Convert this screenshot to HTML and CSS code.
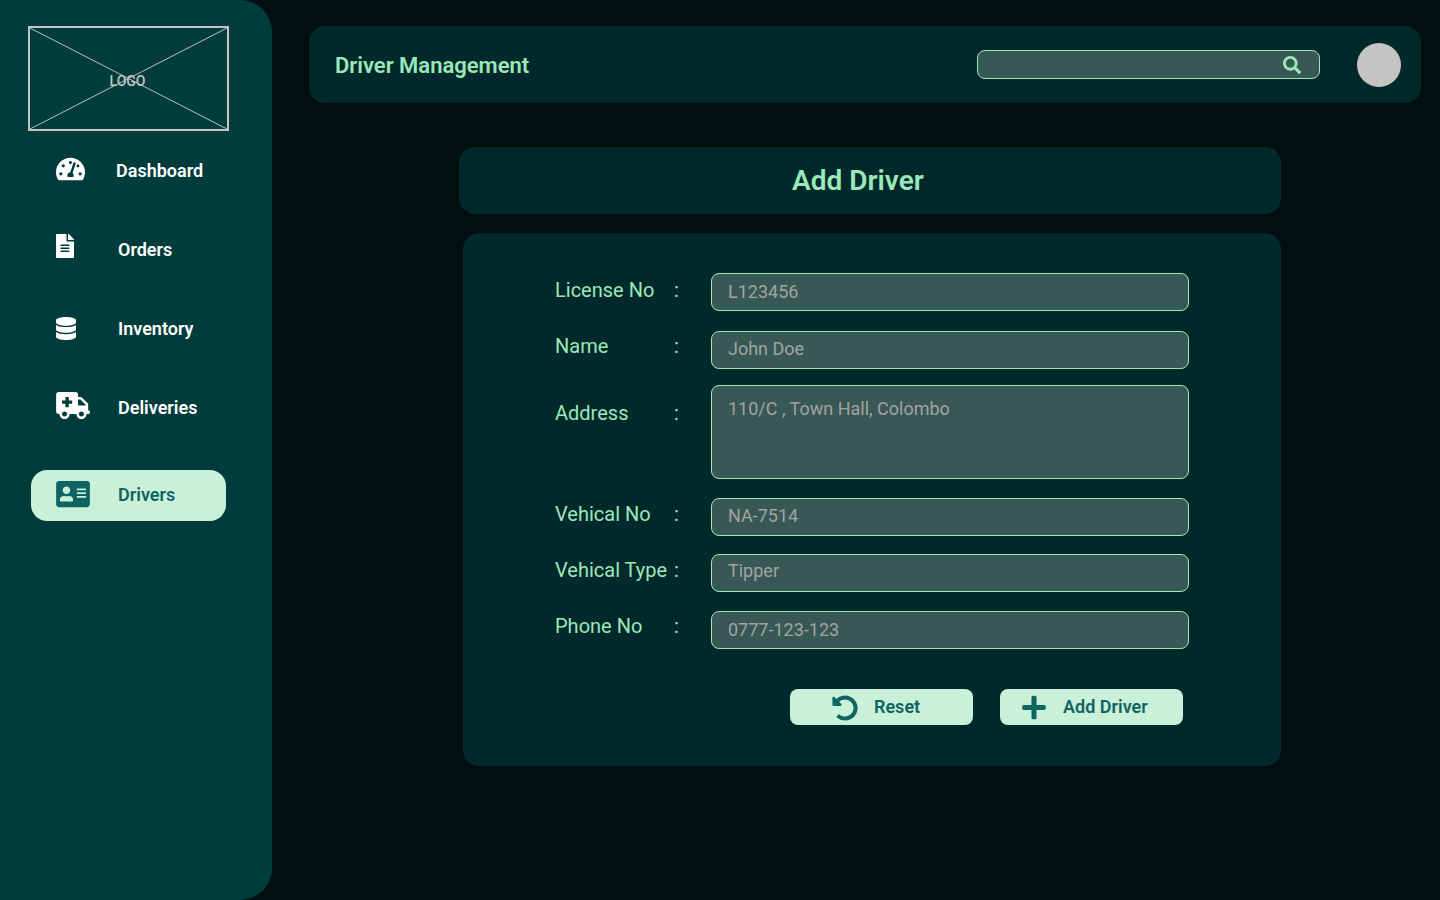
FILE: index.html

```html
<!DOCTYPE html>
<html lang="en">
<head>
  <meta charset="UTF-8">
  <title>Driver Management</title>
  <link rel="stylesheet" href="styles.css">
</head>
<body>
  <aside class="sidebar">
    <div class="logo">
      <svg class="logo-lines" viewBox="0 0 201 105" preserveAspectRatio="none">
        <line x1="0" y1="0" x2="201" y2="105"></line>
        <line x1="201" y1="0" x2="0" y2="105"></line>
      </svg>
      <span class="logo-text">LOGO</span>
    </div>
    <nav class="nav">
      <a class="nav-item nav-dashboard">
        <span class="nav-icon"><svg width="29" height="26" viewBox="0 0 576 512"><path d="M288 32C128.94 32 0 160.94 0 320c0 52.8 14.25 102.26 39.06 144.8 5.61 9.62 16.3 15.2 27.44 15.2h443c11.14 0 21.83-5.58 27.44-15.2C561.75 422.26 576 372.8 576 320c0-159.06-128.94-288-288-288zm0 64c14.71 0 26.58 10.13 30.32 23.65-1.11 2.26-2.64 4.23-3.45 6.67l-9.22 27.67c-5.13 3.49-10.97 6.01-17.64 6.01-17.67 0-32-14.33-32-32S270.33 96 288 96zM96 384c-17.67 0-32-14.33-32-32s14.33-32 32-32 32 14.33 32 32-14.33 32-32 32zm48-160c-17.67 0-32-14.33-32-32s14.33-32 32-32 32 14.33 32 32-14.33 32-32 32zm246.77-72.41l-61.33 184C343.13 347.33 352 364.54 352 384c0 11.72-3.38 22.55-8.88 32H232.88c-5.5-9.45-8.88-20.28-8.88-32 0-33.94 26.5-61.43 59.9-63.59l61.34-184.01c4.17-12.56 17.73-19.45 30.36-15.17 12.57 4.19 19.35 17.79 15.17 30.36zm14.66 57.2l15.52-46.55c3.47-1.29 7.13-2.23 11.05-2.23 17.67 0 32 14.33 32 32s-14.33 32-32 32c-11.38-.01-20.89-6.28-26.57-15.22zM480 384c-17.67 0-32-14.33-32-32s14.33-32 32-32 32 14.33 32 32-14.33 32-32 32z"></path></svg></span>
        Dashboard
      </a>
      <a class="nav-item nav-orders">
        <span class="nav-icon"><svg width="18" height="24" viewBox="0 0 384 512"><path d="M224 136V0H24C10.7 0 0 10.7 0 24v464c0 13.3 10.7 24 24 24h336c13.3 0 24-10.7 24-24V160H248c-13.2 0-24-10.8-24-24zm64 236c0 6.6-5.4 12-12 12H108c-6.6 0-12-5.4-12-12v-8c0-6.6 5.4-12 12-12h168c6.6 0 12 5.4 12 12v8zm0-64c0 6.6-5.4 12-12 12H108c-6.6 0-12-5.4-12-12v-8c0-6.6 5.4-12 12-12h168c6.6 0 12 5.4 12 12v8zm0-72v8c0 6.6-5.4 12-12 12H108c-6.6 0-12-5.4-12-12v-8c0-6.6 5.4-12 12-12h168c6.6 0 12 5.4 12 12zm96-114.1v6.1H256V0h6.1c6.4 0 12.5 2.5 17 7l97.9 98c4.5 4.5 7 10.6 7 16.9z"></path></svg></span>
        Orders
      </a>
      <a class="nav-item">
        <span class="nav-icon"><svg width="20" height="23" viewBox="0 0 448 512"><path d="M448 73.143v45.714C448 159.143 347.667 192 224 192S0 159.143 0 118.857V73.143C0 32.857 100.333 0 224 0s224 32.857 224 73.143zM448 176v102.857C448 319.143 347.667 352 224 352S0 319.143 0 278.857V176c48.125 33.143 136.208 48.572 224 48.572S399.874 209.143 448 176zm0 160v102.857C448 479.143 347.667 512 224 512S0 479.143 0 438.857V336c48.125 33.143 136.208 48.572 224 48.572S399.874 369.143 448 336z"></path></svg></span>
        Inventory
      </a>
      <a class="nav-item nav-deliveries">
        <span class="nav-icon"><svg width="34" height="27" viewBox="0 0 640 512"><path d="M624 352h-16V243.9c0-12.7-5.1-24.9-14.1-33.9L494 110.1c-9-9-21.2-14.1-33.9-14.1H416V48c0-26.5-21.5-48-48-48H48C21.5 0 0 21.5 0 48v320c0 26.5 21.5 48 48 48h16c0 53 43 96 96 96s96-43 96-96h128c0 53 43 96 96 96s96-43 96-96h48c8.8 0 16-7.2 16-16v-32c0-8.8-7.2-16-16-16zM160 464c-26.5 0-48-21.5-48-48s21.5-48 48-48 48 21.5 48 48-21.5 48-48 48zm144-248c0 4.4-3.6 8-8 8h-56v56c0 4.4-3.6 8-8 8h-48c-4.4 0-8-3.6-8-8v-56h-56c-4.4 0-8-3.6-8-8v-48c0-4.4 3.6-8 8-8h56v-56c0-4.4 3.6-8 8-8h48c4.4 0 8 3.6 8 8v56h56c4.4 0 8 3.6 8 8v48zm176 248c-26.5 0-48-21.5-48-48s21.5-48 48-48 48 21.5 48 48-21.5 48-48 48zm80-208H416V144h44.1l99.9 99.9V256z"></path></svg></span>
        Deliveries
      </a>
      <a class="nav-item active">
        <span class="nav-icon"><svg width="34" height="30" viewBox="0 0 576 512"><path d="M528 32H48C21.5 32 0 53.5 0 80v352c0 26.5 21.5 48 48 48h480c26.5 0 48-21.5 48-48V80c0-26.5-21.5-48-48-48zm-352 96c35.3 0 64 28.7 64 64s-28.7 64-64 64-64-28.7-64-64 28.7-64 64-64zm112 236.8c0 10.6-10 19.2-22.4 19.2H86.4C74 384 64 375.4 64 364.8v-19.2c0-31.8 30.1-57.6 67.2-57.6h5c12.3 5.1 25.7 8 39.8 8s27.6-2.9 39.8-8h5c37.1 0 67.2 25.8 67.2 57.6v19.2zM512 312c0 4.4-3.6 8-8 8H360c-4.4 0-8-3.6-8-8v-16c0-4.4 3.6-8 8-8h144c4.4 0 8 3.6 8 8v16zm0-64c0 4.4-3.6 8-8 8H360c-4.4 0-8-3.6-8-8v-16c0-4.4 3.6-8 8-8h144c4.4 0 8 3.6 8 8v16zm0-64c0 4.4-3.6 8-8 8H360c-4.4 0-8-3.6-8-8v-16c0-4.4 3.6-8 8-8h144c4.4 0 8 3.6 8 8v16z"></path></svg></span>
        Drivers
      </a>
    </nav>
  </aside>

  <main class="content">
    <header class="topbar">
      <h1 class="page-title">Driver Management</h1>
      <div class="search">
        <svg width="18" height="18" viewBox="0 0 512 512"><path d="M505 442.7L405.3 343c-4.5-4.5-10.6-7-17-7H372c27.6-35.3 44-79.7 44-128C416 93.1 322.9 0 208 0S0 93.1 0 208s93.1 208 208 208c48.3 0 92.7-16.4 128-44v16.3c0 6.4 2.5 12.5 7 17l99.7 99.7c9.4 9.4 24.6 9.4 33.9 0l28.3-28.3c9.4-9.4 9.4-24.6.1-34zM208 336c-70.7 0-128-57.2-128-128 0-70.7 57.2-128 128-128 70.7 0 128 57.2 128 128 0 70.7-57.2 128-128 128z"></path></svg>
      </div>
      <div class="avatar"></div>
    </header>

    <div class="form-title"><h2>Add Driver</h2></div>

    <form class="form-card">
      <div class="row row-license">
        <label>License No</label><span class="colon">:</span>
        <input type="text" placeholder="L123456">
      </div>
      <div class="row row-name">
        <label>Name</label><span class="colon">:</span>
        <input type="text" placeholder="John Doe">
      </div>
      <div class="row row-address">
        <label>Address</label><span class="colon">:</span>
        <textarea placeholder="110/C , Town Hall, Colombo"></textarea>
      </div>
      <div class="row row-vehicle">
        <label>Vehical No</label><span class="colon">:</span>
        <input type="text" placeholder="NA-7514">
      </div>
      <div class="row row-type">
        <label>Vehical Type</label><span class="colon">:</span>
        <input type="text" placeholder="Tipper">
      </div>
      <div class="row row-phone">
        <label>Phone No</label><span class="colon">:</span>
        <input type="text" placeholder="0777-123-123">
      </div>
      <div class="actions">
        <button type="button" class="btn btn-reset">
          <svg width="26" height="26" viewBox="0 0 512 512"><path d="M255.545 8c-66.269.119-126.438 26.233-170.86 68.685L48.971 40.971C33.851 25.851 8 36.559 8 57.941V192c0 13.255 10.745 24 24 24h134.059c21.382 0 32.09-25.851 16.971-40.971l-41.75-41.75c30.864-28.899 70.801-44.907 113.23-45.273 92.398-.798 170.283 73.977 169.484 169.442C423.236 348.009 349.816 424 256 424c-41.127 0-79.997-14.678-110.63-41.556-4.743-4.161-11.906-3.908-16.368.553L89.34 422.659c-4.872 4.872-4.631 12.815.482 17.433C133.798 479.813 192.074 504 256 504c136.966 0 247.999-111.033 248-247.998C504.001 119.193 392.354 7.755 255.545 8z"></path></svg>
          Reset
        </button>
        <button type="button" class="btn btn-add">
          <svg width="24" height="27" viewBox="0 0 448 512"><path d="M416 208H272V64c0-17.67-14.33-32-32-32h-32c-17.67 0-32 14.33-32 32v144H32c-17.67 0-32 14.33-32 32v32c0 17.67 14.33 32 32 32h144v144c0 17.67 14.33 32 32 32h32c17.67 0 32-14.33 32-32V304h144c17.67 0 32-14.33 32-32v-32c0-17.67-14.33-32-32-32z"></path></svg>
          Add Driver
        </button>
      </div>
    </form>
  </main>
</body>
</html>
```

FILE: styles.css

```css
* {
  box-sizing: border-box;
}
body {
  margin: 0;
  height: 900px;
  display: flex;
  background-color: #010f10;
  font-family: Roboto, "Liberation Sans", sans-serif;
  overflow: hidden;
}

/* sidebar */
.sidebar {
  width: 272px;
  height: 900px;
  flex-shrink: 0;
  background-color: #003c3c;
  border-radius: 0 32px 32px 0;
  padding: 26px 0 0 28px;
}
.logo {
  position: relative;
  width: 201px;
  height: 105px;
  border: 2px solid #c4c4c4;
  display: flex;
  align-items: center;
  justify-content: center;
}
.logo-lines {
  position: absolute;
  top: 0;
  left: 0;
  width: 100%;
  height: 100%;
}
.logo-lines line {
  stroke: #c4c4c4;
  stroke-width: 1;
}
.logo-text {
  position: relative;
  top: 2px;
  left: -1px;
  color: #c4c4c4;
  font-size: 14px;
  font-weight: 500;
}
.nav {
  display: flex;
  flex-direction: column;
  margin-top: 14px;
  margin-left: 3px;
  width: 195px;
}
.nav-item {
  height: 51px;
  margin-bottom: 28px;
  display: flex;
  align-items: center;
  padding-left: 25px;
  color: #fff;
  font-size: 18px;
  font-weight: 600;
  border-radius: 16px;
}
.nav-item:nth-child(4) {
  margin-bottom: 37px;
}
.nav-icon {
  width: 62px;
  display: flex;
  fill: #fff;
}
.nav-dashboard .nav-icon {
  width: 60px;
  margin-bottom: 3px;
}
.nav-orders .nav-icon {
  margin-bottom: 8px;
}
.nav-deliveries .nav-icon {
  margin-bottom: 4px;
}
.nav-item.active {
  background-color: #c9f0d9;
  color: #0e6461;
  padding-bottom: 2px;
}
.nav-item.active .nav-icon {
  fill: #0e6461;
  margin-bottom: 2px;
}

/* main */
.content {
  flex: 1;
  padding: 26px 19px 0 37px;
}
.topbar {
  height: 77px;
  display: flex;
  align-items: center;
  background-color: #01292b;
  border-radius: 16px;
  padding: 0 20px 0 26px;
}
.page-title {
  margin: 0;
  flex: 1;
  padding-top: 2px;
  color: #9be8b8;
  font-size: 22px;
  font-weight: 600;
}
.search {
  width: 343px;
  height: 29px;
  margin-top: -1px;
  display: flex;
  align-items: center;
  justify-content: flex-end;
  padding: 2px 18px 0 0;
  background-color: #385855;
  border: 1px solid #9be8b8;
  border-radius: 8px;
  fill: #9be8b8;
}
.avatar {
  width: 44px;
  height: 44px;
  margin-left: 37px;
  border-radius: 50%;
  background-color: #c4c4c4;
}
.form-title {
  width: 822px;
  height: 67px;
  margin: 44px 0 0 150px;
  padding-right: 24px;
  display: flex;
  align-items: center;
  justify-content: center;
  background-color: #01292b;
  border-radius: 16px;
}
.form-title h2 {
  margin: 0;
  color: #9be8b8;
  font-size: 28px;
  font-weight: 600;
}
.form-card {
  width: 818px;
  height: 533px;
  margin: 19px 0 0 154px;
  padding: 40px 92px 0;
  background-color: #01292b;
  border-radius: 16px;
}

/* form rows */
.row {
  display: flex;
  align-items: flex-start;
  color: #9be8b8;
  font-size: 20px;
}
.row label {
  width: 119px;
}
.row .colon {
  width: 37px;
}
.row input,
.row textarea {
  width: 478px;
  height: 38px;
  padding: 0 16px;
  background-color: #385855;
  border: 1px solid #9be8b8;
  border-radius: 8px;
  color: #a3a3a3;
  font-family: Roboto, "Liberation Sans", sans-serif;
  font-size: 18px;
  outline: none;
  resize: none;
}
.row textarea {
  height: 94px;
  padding-top: 12px;
  display: block;
}
.row ::placeholder {
  color: #a3a3a3;
  opacity: 1;
}
.row-license { margin-bottom: 20px; }
.row-name { margin-bottom: 16px; }
.row-address { margin-bottom: 19px; }
.row-vehicle { margin-bottom: 18px; }
.row-type { margin-bottom: 19px; }
.row-license label, .row-license .colon { padding-top: 5px; }
.row-name label, .row-name .colon { padding-top: 3px; }
.row-address label, .row-address .colon { padding-top: 16px; }
.row-vehicle label, .row-vehicle .colon { padding-top: 4px; }
.row-type label, .row-type .colon { padding-top: 4px; }
.row-phone label, .row-phone .colon { padding-top: 3px; }
.row-license input { padding-bottom: 2px; }
.row-name input { padding-bottom: 3px; }
.row-vehicle input { padding-bottom: 4px; }
.row-type input { padding-bottom: 6px; }
.row-phone input { padding-bottom: 2px; }
.actions {
  display: flex;
  gap: 27px;
  margin-top: 40px;
  margin-left: 235px;
}
.btn {
  width: 183px;
  height: 36px;
  display: flex;
  align-items: center;
  padding-bottom: 2px;
  border: none;
  border-radius: 8px;
  background-color: #c9f0d9;
  color: #0e6461;
  fill: #0e6461;
  font-family: Roboto, "Liberation Sans", sans-serif;
  font-size: 18px;
  font-weight: 600;
}
.btn svg {
  margin-top: 2px;
}
.btn-reset {
  padding-left: 42px;
  gap: 16px;
}
.btn-add {
  padding-left: 22px;
  gap: 17px;
}
```
